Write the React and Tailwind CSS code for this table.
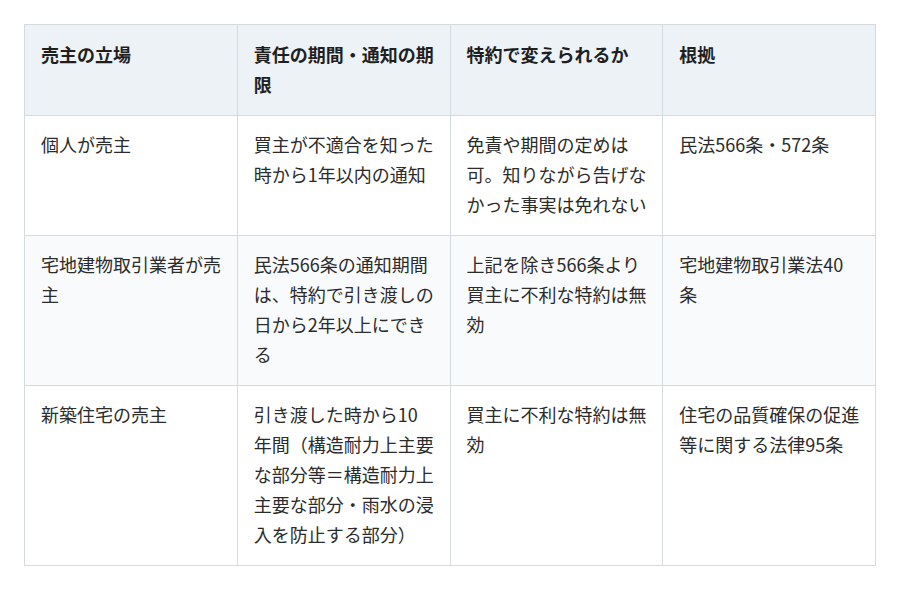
const head = [
  ["売主の立場"],
  ["責任の期間・通知の期", "限"],
  ["特約で変えられるか"],
  ["根拠"],
];

const rows = [
  [
    ["個人が売主"],
    ["買主が不適合を知った", "時から1年以内の通知"],
    ["免責や期間の定めは", "可。知りながら告げな", "かった事実は免れない"],
    ["民法566条・572条"],
  ],
  [
    ["宅地建物取引業者が売", "主"],
    ["民法566条の通知期間", "は、特約で引き渡しの", "日から2年以上にでき", "る"],
    ["上記を除き566条より", "買主に不利な特約は無", "効"],
    ["宅地建物取引業法40", "条"],
  ],
  [
    ["新築住宅の売主"],
    ["引き渡した時から10", "年間（構造耐力上主要", "な部分等＝構造耐力上", "主要な部分・雨水の浸", "入を防止する部分）"],
    ["買主に不利な特約は無", "効"],
    ["住宅の品質確保の促進", "等に関する法律95条"],
  ],
];

const Lines = ({ lines }) =>
  lines.map((l, i) => (
    <span key={i} className="block whitespace-nowrap">
      {l}
    </span>
  ));

export default function App() {
  return (
    <div
      className="w-[900px] h-[592px] bg-white pt-6 pl-6"
      style={{ fontFamily: '"Noto Sans CJK JP", "Noto Sans", sans-serif' }}
    >
      <table className="w-[852px] table-fixed border-collapse text-[18px] leading-[30px] text-[#2b2b2b]">
        <thead>
          <tr className="bg-[#edf2f7]">
            {head.map((h, i) => (
              <th
                key={i}
                className="border border-[#d3dae2] px-4 pt-[14px] pb-[16px] text-left align-top font-bold text-[#1f1f1f]"
              >
                <Lines lines={h} />
              </th>
            ))}
          </tr>
        </thead>
        <tbody>
          {rows.map((r, ri) => (
            <tr key={ri} className={ri === 1 ? "bg-[#f9fafc]" : "bg-white"}>
              {r.map((c, ci) => (
                <td
                  key={ci}
                  className="border border-[#d3dae2] px-4 pt-[13px] pb-[16px] align-top"
                >
                  <Lines lines={c} />
                </td>
              ))}
            </tr>
          ))}
        </tbody>
      </table>
    </div>
  );
}
